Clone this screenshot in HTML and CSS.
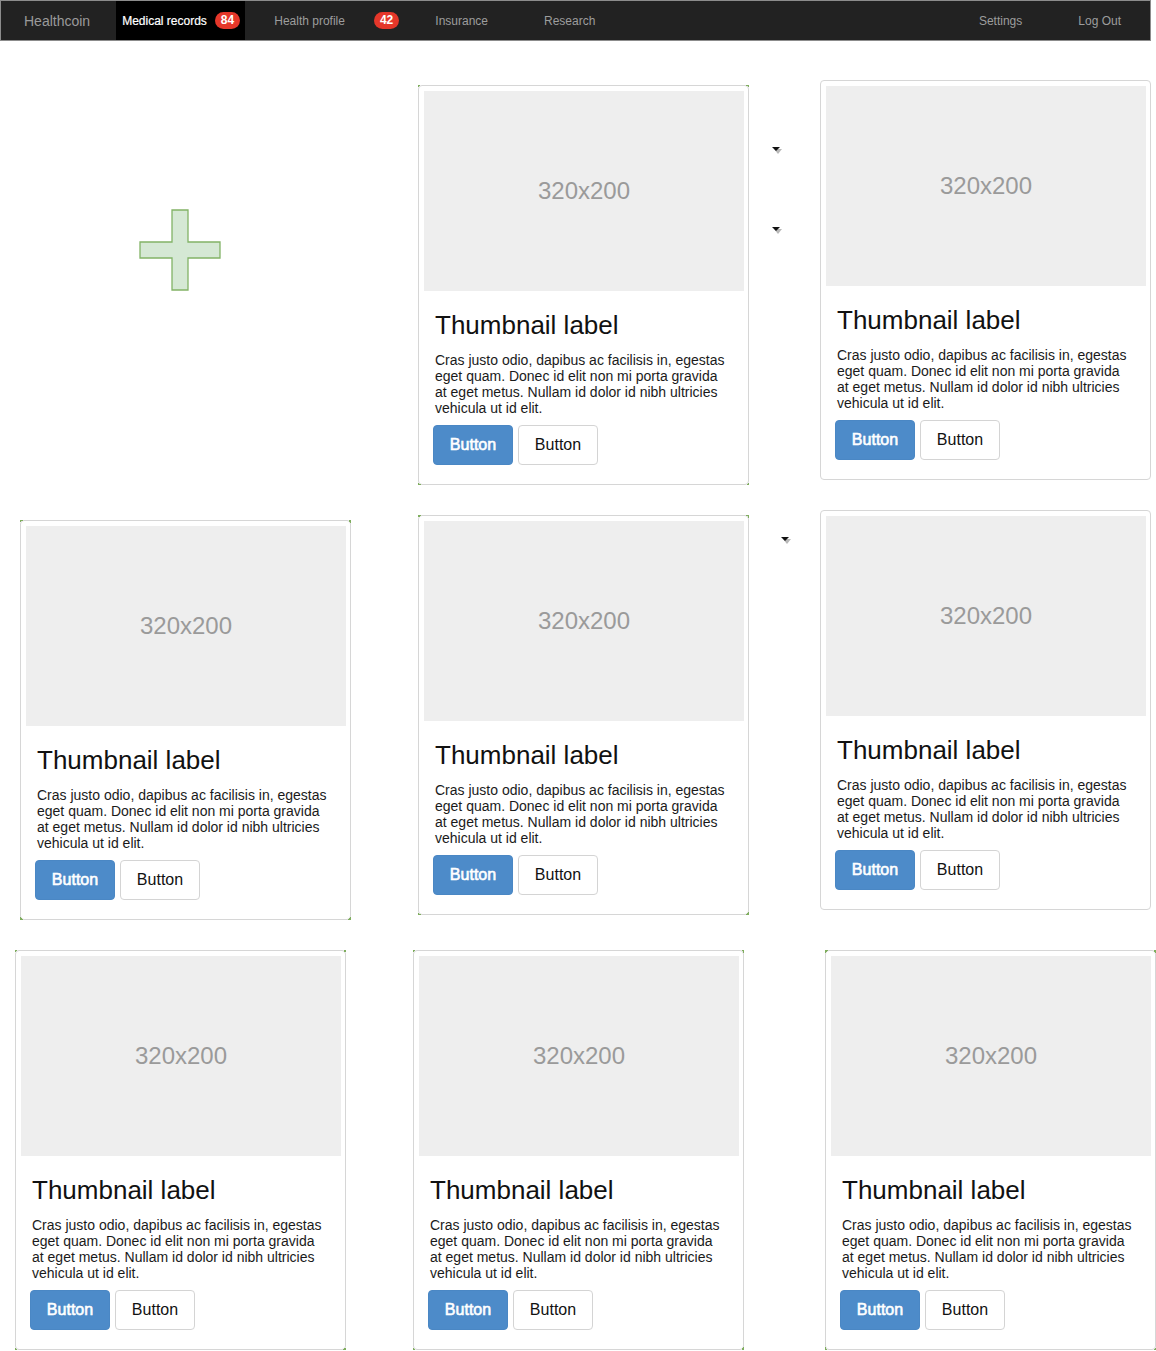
FILE: index.html
```html
<!DOCTYPE html>
<html>
<head>
<meta charset="utf-8">
<title>Healthcoin</title>
<link rel="stylesheet" href="styles.css">
</head>
<body>
<nav class="navbar">
  <span class="brand">Healthcoin</span>
  <span class="nav-active">Medical records <span class="badge">84</span></span>
  <span class="nav-link nav-health">Health profile</span>
  <span class="badge badge-gap">42</span>
  <span class="nav-link nav-insurance">Insurance</span>
  <span class="nav-link nav-research">Research</span>
  <span class="nav-link nav-settings">Settings</span>
  <span class="nav-link nav-logout">Log Out</span>
</nav>

<main class="canvas">
  <div class="row row-1">
    <div class="plus-cell">
      <svg class="plus" width="82" height="82" viewBox="0 0 82 82">
        <polygon points="33,1 49,1 49,33 81,33 81,49 49,49 49,81 33,81 33,49 1,49 1,33 33,33" fill="#d5e8d4" stroke="#82b366" stroke-width="1.3"/>
      </svg>
    </div>
    <div class="card card-a marked">
      <div class="thumb">320x200</div>
      <div class="caption">
        <h3>Thumbnail label</h3>
        <p>Cras justo odio, dapibus ac facilisis in, egestas eget quam. Donec id elit non mi porta gravida at eget metus. Nullam id dolor id nibh ultricies vehicula ut id elit.</p>
        <div class="actions"><span class="btn btn-primary">Button</span><span class="btn btn-default">Button</span></div>
      </div>
    </div>
    <div class="arrow-cell arrow-cell-1">
      <svg class="caret" width="10" height="7" viewBox="0 0 10 7"><polygon points="2,2 10,2 6,7" fill="#b8b8b8"/><polygon points="0,0 8,0 4,4" fill="#111"/></svg>
      <svg class="caret caret-second" width="10" height="7" viewBox="0 0 10 7"><polygon points="2,2 10,2 6,7" fill="#b8b8b8"/><polygon points="0,0 8,0 4,4" fill="#111"/></svg>
    </div>
    <div class="card card-b">
      <div class="thumb">320x200</div>
      <div class="caption">
        <h3>Thumbnail label</h3>
        <p>Cras justo odio, dapibus ac facilisis in, egestas eget quam. Donec id elit non mi porta gravida at eget metus. Nullam id dolor id nibh ultricies vehicula ut id elit.</p>
        <div class="actions"><span class="btn btn-primary">Button</span><span class="btn btn-default">Button</span></div>
      </div>
    </div>
  </div>

  <div class="row row-2">
    <div class="card card-c marked">
      <div class="thumb">320x200</div>
      <div class="caption">
        <h3>Thumbnail label</h3>
        <p>Cras justo odio, dapibus ac facilisis in, egestas eget quam. Donec id elit non mi porta gravida at eget metus. Nullam id dolor id nibh ultricies vehicula ut id elit.</p>
        <div class="actions"><span class="btn btn-primary">Button</span><span class="btn btn-default">Button</span></div>
      </div>
    </div>
    <div class="card card-d marked">
      <div class="thumb">320x200</div>
      <div class="caption">
        <h3>Thumbnail label</h3>
        <p>Cras justo odio, dapibus ac facilisis in, egestas eget quam. Donec id elit non mi porta gravida at eget metus. Nullam id dolor id nibh ultricies vehicula ut id elit.</p>
        <div class="actions"><span class="btn btn-primary">Button</span><span class="btn btn-default">Button</span></div>
      </div>
    </div>
    <div class="arrow-cell arrow-cell-2">
      <svg class="caret" width="10" height="7" viewBox="0 0 10 7"><polygon points="2,2 10,2 6,7" fill="#b8b8b8"/><polygon points="0,0 8,0 4,4" fill="#111"/></svg>
    </div>
    <div class="card card-e">
      <div class="thumb">320x200</div>
      <div class="caption">
        <h3>Thumbnail label</h3>
        <p>Cras justo odio, dapibus ac facilisis in, egestas eget quam. Donec id elit non mi porta gravida at eget metus. Nullam id dolor id nibh ultricies vehicula ut id elit.</p>
        <div class="actions"><span class="btn btn-primary">Button</span><span class="btn btn-default">Button</span></div>
      </div>
    </div>
  </div>

  <div class="row row-3">
    <div class="card card-f marked">
      <div class="thumb">320x200</div>
      <div class="caption">
        <h3>Thumbnail label</h3>
        <p>Cras justo odio, dapibus ac facilisis in, egestas eget quam. Donec id elit non mi porta gravida at eget metus. Nullam id dolor id nibh ultricies vehicula ut id elit.</p>
        <div class="actions"><span class="btn btn-primary">Button</span><span class="btn btn-default">Button</span></div>
      </div>
    </div>
    <div class="card card-g marked">
      <div class="thumb">320x200</div>
      <div class="caption">
        <h3>Thumbnail label</h3>
        <p>Cras justo odio, dapibus ac facilisis in, egestas eget quam. Donec id elit non mi porta gravida at eget metus. Nullam id dolor id nibh ultricies vehicula ut id elit.</p>
        <div class="actions"><span class="btn btn-primary">Button</span><span class="btn btn-default">Button</span></div>
      </div>
    </div>
    <div class="card card-h marked">
      <div class="thumb">320x200</div>
      <div class="caption">
        <h3>Thumbnail label</h3>
        <p>Cras justo odio, dapibus ac facilisis in, egestas eget quam. Donec id elit non mi porta gravida at eget metus. Nullam id dolor id nibh ultricies vehicula ut id elit.</p>
        <div class="actions"><span class="btn btn-primary">Button</span><span class="btn btn-default">Button</span></div>
      </div>
    </div>
  </div>
</main>
</body>
</html>
```

FILE: styles.css
```css
html, body {
  margin: 0;
  padding: 0;
  background: #fff;
  overflow: hidden;
}

body {
  font-family: "Liberation Sans", Arial, Helvetica, sans-serif;
  color: #111;
  width: 1156px;
  height: 1351px;
}

/* ---------- navbar ---------- */
.navbar {
  box-sizing: border-box;
  width: 1151px;
  height: 41px;
  background: #222;
  border: 1px solid #8c8c8c;
  display: flex;
  align-items: stretch;
  font-size: 12px;
  color: #9d9d9d;
}

.navbar > span {
  display: flex;
  align-items: center;
}

.brand {
  font-size: 14px;
  margin-left: 23px;
  color: #9a9a9a;
}

.nav-active {
  margin-left: 26px;
  padding: 0 5px 0 6px;
  background: #000;
  color: #fff;
  gap: 8px;
  -webkit-text-stroke: 0.2px #fff;
}

.badge {
  display: inline-flex;
  align-items: center;
  justify-content: center;
  height: 17px;
  padding: 0 6px;
  border-radius: 9px;
  background: #e5372a;
  color: #fff;
  font-weight: bold;
  font-size: 12px;
  line-height: 17px;
  -webkit-text-stroke: 0;
}

.navbar > .badge-gap {
  align-self: center;
  margin-left: 29px;
  display: inline-flex;
}

.nav-health { margin-left: 29px; }
.nav-insurance { margin-left: 36px; }
.nav-research { margin-left: 56px; }
.nav-settings { margin-left: auto; }
.nav-logout { margin-left: 56px; margin-right: 29px; }

/* ---------- canvas rows ---------- */
.canvas {
  display: flex;
  flex-direction: column;
}

.row {
  display: flex;
  align-items: flex-start;
}

.plus-cell {
  width: 418px;
  flex: none;
}

.plus {
  display: block;
  margin: 168px 0 0 139px;
}

.arrow-cell {
  width: 71px;
  flex: none;
  display: flex;
  flex-direction: column;
}

.caret { display: block; }

.arrow-cell-1 .caret { margin: 106px 0 0 23px; }
.arrow-cell-1 .caret-second { margin-top: 73px; }
.arrow-cell-2 .caret { margin: 52px 0 0 32px; }

/* ---------- cards ---------- */
.card {
  position: relative;
  box-sizing: border-box;
  flex: none;
  width: 331px;
  height: 400px;
  padding: 4px;
  border: 1px solid #d6d6d6;
  border-radius: 4px;
  background: #fff;
}

.card.marked::before {
  content: "";
  position: absolute;
  top: -1px;
  left: -1px;
  right: -1px;
  bottom: -1px;
  pointer-events: none;
  background:
    linear-gradient(135deg, #7fae5e 50%, transparent 50%) top left / 3px 3px no-repeat,
    linear-gradient(225deg, #7fae5e 50%, transparent 50%) top right / 3px 3px no-repeat,
    linear-gradient(45deg, #7fae5e 50%, transparent 50%) bottom left / 3px 3px no-repeat,
    linear-gradient(315deg, #7fae5e 50%, transparent 50%) bottom right / 3px 3px no-repeat;
}

.card-a { margin-top: 44px; }
.card-b { margin-top: 39px; }

.card-c { margin-top: 35px; margin-left: 20px; }
.card-d { margin-top: 30px; margin-left: 67px; }
.card-e { margin-top: 25px; }

.card-f { margin-top: 30px; margin-left: 15px; }
.card-g { margin-top: 30px; margin-left: 67px; }
.card-h { margin-top: 30px; margin-left: 81px; }

.thumb {
  width: 320px;
  height: 200px;
  margin: 1px 0 0 1px;
  background: #eeeeee;
  color: #9a9a9a;
  font-size: 24px;
  display: flex;
  align-items: center;
  justify-content: center;
}

.caption {
  padding: 20px 12px 15px 12px;
}

.caption h3 {
  margin: 0 0 12px 0;
  font-size: 26px;
  font-weight: normal;
  line-height: 1.1;
  color: #111;
}

.caption p {
  margin: 0 0 9px 0;
  font-size: 14px;
  line-height: 16px;
  color: #1a1a1a;
}

.actions {
  display: flex;
  gap: 5px;
  margin-left: -2px;
}

.btn {
  box-sizing: border-box;
  width: 80px;
  height: 40px;
  border-radius: 4px;
  display: flex;
  align-items: center;
  justify-content: center;
  font-size: 16px;
}

.btn-primary {
  background: #4d8bc9;
  border: 1px solid #4a87c4;
  color: #fff;
  font-weight: normal;
  -webkit-text-stroke: 0.6px #fff;
}

.btn-default {
  background: #fff;
  border: 1px solid #d4d4d4;
  color: #111;
}
```
